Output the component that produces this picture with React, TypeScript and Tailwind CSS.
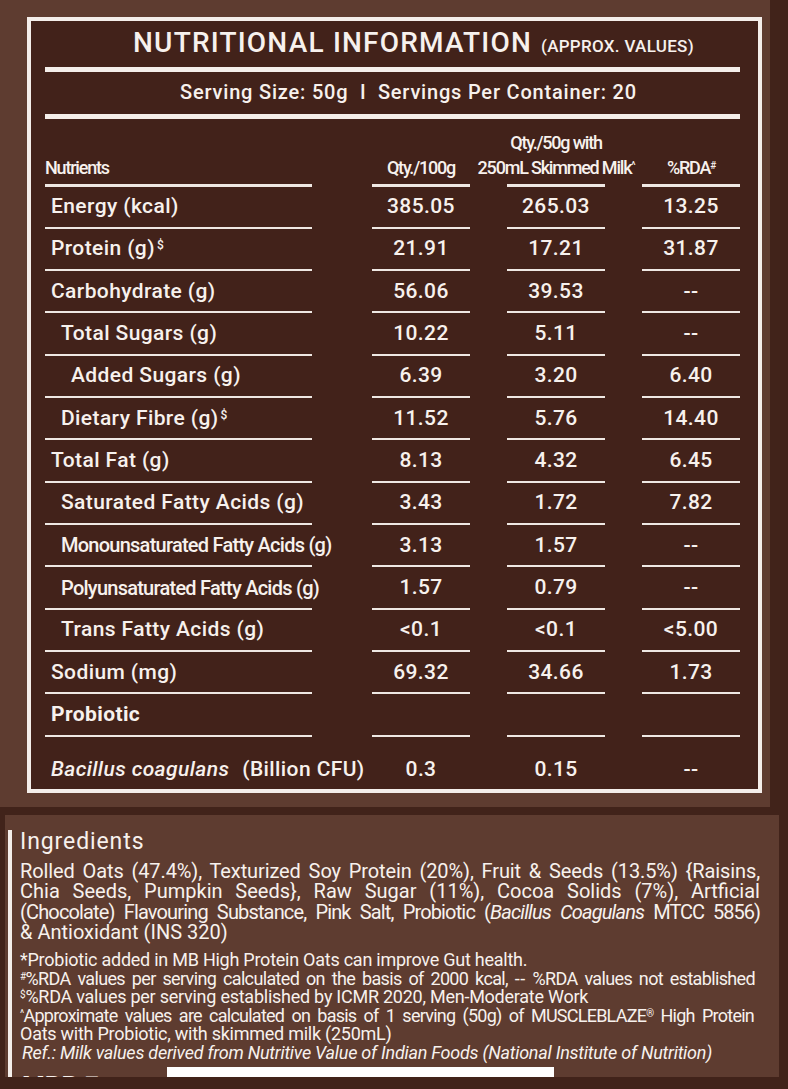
import React from 'react';

type Row = {
  name: string;
  sup?: string;
  indent: 0 | 1 | 2;
  narrow?: boolean;
  v: [string, string, string];
};

const rows: Row[] = [
  { name: 'Energy (kcal)', indent: 0, v: ['385.05', '265.03', '13.25'] },
  { name: 'Protein (g)', sup: '$', indent: 0, v: ['21.91', '17.21', '31.87'] },
  { name: 'Carbohydrate (g)', indent: 0, v: ['56.06', '39.53', '--'] },
  { name: 'Total Sugars (g)', indent: 1, v: ['10.22', '5.11', '--'] },
  { name: 'Added Sugars (g)', indent: 2, v: ['6.39', '3.20', '6.40'] },
  { name: 'Dietary Fibre (g)', sup: '$', indent: 1, v: ['11.52', '5.76', '14.40'] },
  { name: 'Total Fat (g)', indent: 0, v: ['8.13', '4.32', '6.45'] },
  { name: 'Saturated Fatty Acids (g)', indent: 1, v: ['3.43', '1.72', '7.82'] },
  { name: 'Monounsaturated Fatty Acids (g)', indent: 1, narrow: true, v: ['3.13', '1.57', '--'] },
  { name: 'Polyunsaturated Fatty Acids (g)', indent: 1, narrow: true, v: ['1.57', '0.79', '--'] },
  { name: 'Trans Fatty Acids (g)', indent: 1, v: ['<0.1', '<0.1', '<5.00'] },
  { name: 'Sodium (mg)', indent: 0, v: ['69.32', '34.66', '1.73'] },
];

const indentCls = ['pl-[6px]', 'pl-[16px]', 'pl-[26px]'];

const cellBase = 'h-[42.33px] border-b-2 border-[#efe8e3] flex items-center';

function DataRow({ r }: { r: Row }) {
  return (
    <div className="flex text-[21px] font-medium">
      <div className={`${cellBase} w-[267px] ${indentCls[r.indent]} whitespace-nowrap`}>
        {r.narrow ? (
          <span className="text-[20px] tracking-[-0.75px]">{r.name}</span>
        ) : (
          <span className="tracking-[0.4px]">
            {r.name}
            {r.sup && <sup className="text-[12px] ml-[2px]">{r.sup}</sup>}
          </span>
        )}
      </div>
      <div className={`${cellBase} ml-[60px] w-[98px] justify-center tracking-[0.4px]`}>{r.v[0]}</div>
      <div className={`${cellBase} ml-[37px] w-[98px] justify-center tracking-[0.4px]`}>{r.v[1]}</div>
      <div className={`${cellBase} ml-[37px] w-[98px] justify-center tracking-[0.4px]`}>{r.v[2]}</div>
    </div>
  );
}

const headCell =
  'h-full border-b-[3px] border-[#efe8e3] flex flex-col justify-end pb-[4px] leading-[25px] text-[18px] font-medium tracking-[-1.2px]';

export default function App() {
  return (
    <div className="w-[788px] h-[1089px] overflow-hidden bg-[#41231a] font-['Roboto',sans-serif] text-[#f7f1ed]">
      <div className="w-[770px] h-[807px] bg-[#5e3c30] pl-[27px] pt-[17px]">
        <div className="w-[735px] h-[776px] border-4 border-[#f4eeea] bg-[#42221a] pl-[14px] pr-[18px] flex flex-col">
          {/* Title */}
          <div className="h-[46px] pt-[6px] flex justify-center items-baseline pl-[42px] font-medium">
            <span className="text-[28px] leading-[32px] tracking-[1.2px]">NUTRITIONAL INFORMATION</span>
            <span className="text-[17px] leading-[32px] tracking-[0.3px] ml-[9px]">(APPROX. VALUES)</span>
          </div>
          <div className="h-[5px] bg-[#f4eeea]" />
          {/* Serving */}
          <div className="h-[42px] pt-[8px] flex justify-center pl-[32px]">
            <span className="text-[20px] leading-[24px] font-medium tracking-[0.8px]">
              Serving Size: 50g&nbsp; I &nbsp;Servings Per Container: 20
            </span>
          </div>
          <div className="h-[5px] bg-[#f4eeea]" />
          {/* Header */}
          <div className="h-[67.5px] flex">
            <div className={`${headCell} w-[267px] items-start`}>Nutrients</div>
            <div className={`${headCell} ml-[60px] w-[98px] items-center`}>Qty./100g</div>
            <div className={`${headCell} ml-[37px] w-[98px] items-center whitespace-nowrap`}>
              <span>Qty./50g with</span>
              <span>
                250mL Skimmed Milk<sup className="text-[10px]">^</sup>
              </span>
            </div>
            <div className={`${headCell} ml-[37px] w-[98px] items-center`}>
              <span>
                %RDA<sup className="text-[10px]">#</sup>
              </span>
            </div>
          </div>
          {rows.map((r) => (
            <DataRow key={r.name} r={r} />
          ))}
          {/* Probiotic */}
          <div className="flex text-[21px]">
            <div className={`${cellBase} w-[267px] pl-[6px] font-bold tracking-[0.4px]`}>Probiotic</div>
            <div className={`${cellBase} ml-[60px] w-[98px]`} />
            <div className={`${cellBase} ml-[37px] w-[98px]`} />
            <div className={`${cellBase} ml-[37px] w-[98px]`} />
          </div>
          {/* Bacillus */}
          <div className="flex-1 flex pt-[17px] text-[21px] font-medium tracking-[0.4px]">
            <div className="w-[267px] pl-[6px] whitespace-nowrap">
              <em>Bacillus coagulans</em>
              <span className="ml-[13px]">(Billion CFU)</span>
            </div>
            <div className="ml-[60px] w-[98px] text-center">0.3</div>
            <div className="ml-[37px] w-[98px] text-center">0.15</div>
            <div className="ml-[37px] w-[98px] text-center">--</div>
          </div>
        </div>
      </div>

      {/* Ingredients panel */}
      <div className="ml-[5px] mt-[8px] w-[774px] h-[262px] bg-[#5e3c30] pl-[3px] pt-[15px] overflow-hidden">
        <div className="h-[400px] border-l-4 border-[#f4eeea] pl-[8px] pr-[19px]">
          <div className="text-[23px] leading-[24px] tracking-[0.9px]">Ingredients</div>
          <div className="mt-[7px] text-[20px] leading-[20.3px]">
            <div className="text-justify [text-align-last:justify] tracking-[-0.1px]">
              Rolled Oats (47.4%), Texturized Soy Protein (20%), Fruit &amp; Seeds (13.5%) {'{'}Raisins,
            </div>
            <div className="text-justify [text-align-last:justify]">
              Chia Seeds, Pumpkin Seeds{'}'}, Raw Sugar (11%), Cocoa Solids (7%), Artficial
            </div>
            <div className="text-justify [text-align-last:justify] tracking-[-0.85px]">
              (Chocolate) Flavouring Substance, Pink Salt, Probiotic (<em>Bacillus Coagulans</em>{' '}
              <span className="tracking-[-1px]">MTCC 5856)</span>
            </div>
            <div className="whitespace-nowrap">&amp; Antioxidant (INS 320)</div>
          </div>
          <div className="mt-[9px] text-[18px] leading-[18.5px]">
            <div className="whitespace-nowrap tracking-[-0.25px]">
              *Probiotic added in MB High Protein Oats can improve Gut health.
            </div>
            <div className="w-[735px] text-justify [text-align-last:justify] tracking-[-0.65px]">
              <sup className="text-[10px]">#</sup>%RDA values per serving calculated on the basis of 2000 kcal,{' '}
              <span className="tracking-[0.5px]">--</span> %RDA values not established
            </div>
            <div className="whitespace-nowrap tracking-[-0.25px]">
              <sup className="text-[10px]">$</sup>%RDA values per serving established by ICMR 2020, Men-Moderate Work
            </div>
            <div className="w-[734px] text-justify [text-align-last:justify] tracking-[-0.75px]">
              <sup className="text-[10px]">^</sup>Approximate values are calculated on basis of 1 serving (50g) of MUSCLEBLAZE
              <sup className="text-[10px]">®</sup> High Protein
            </div>
            <div className="whitespace-nowrap tracking-[-0.25px]">Oats with Probiotic, with skimmed milk (250mL)</div>
            <div className="pl-[2px] italic whitespace-nowrap tracking-[-0.25px]">
              Ref.: Milk values derived from Nutritive Value of Indian Foods (National Institute of Nutrition)
            </div>
          </div>
          <div className="mt-[4.5px] flex">
            <div className="w-[147px] pl-[2px] pt-[4px] text-[26px] leading-[30px] font-bold">MRP ₹</div>
            <div className="w-[387px] h-[30px] bg-white" />
          </div>
        </div>
      </div>
    </div>
  );
}
